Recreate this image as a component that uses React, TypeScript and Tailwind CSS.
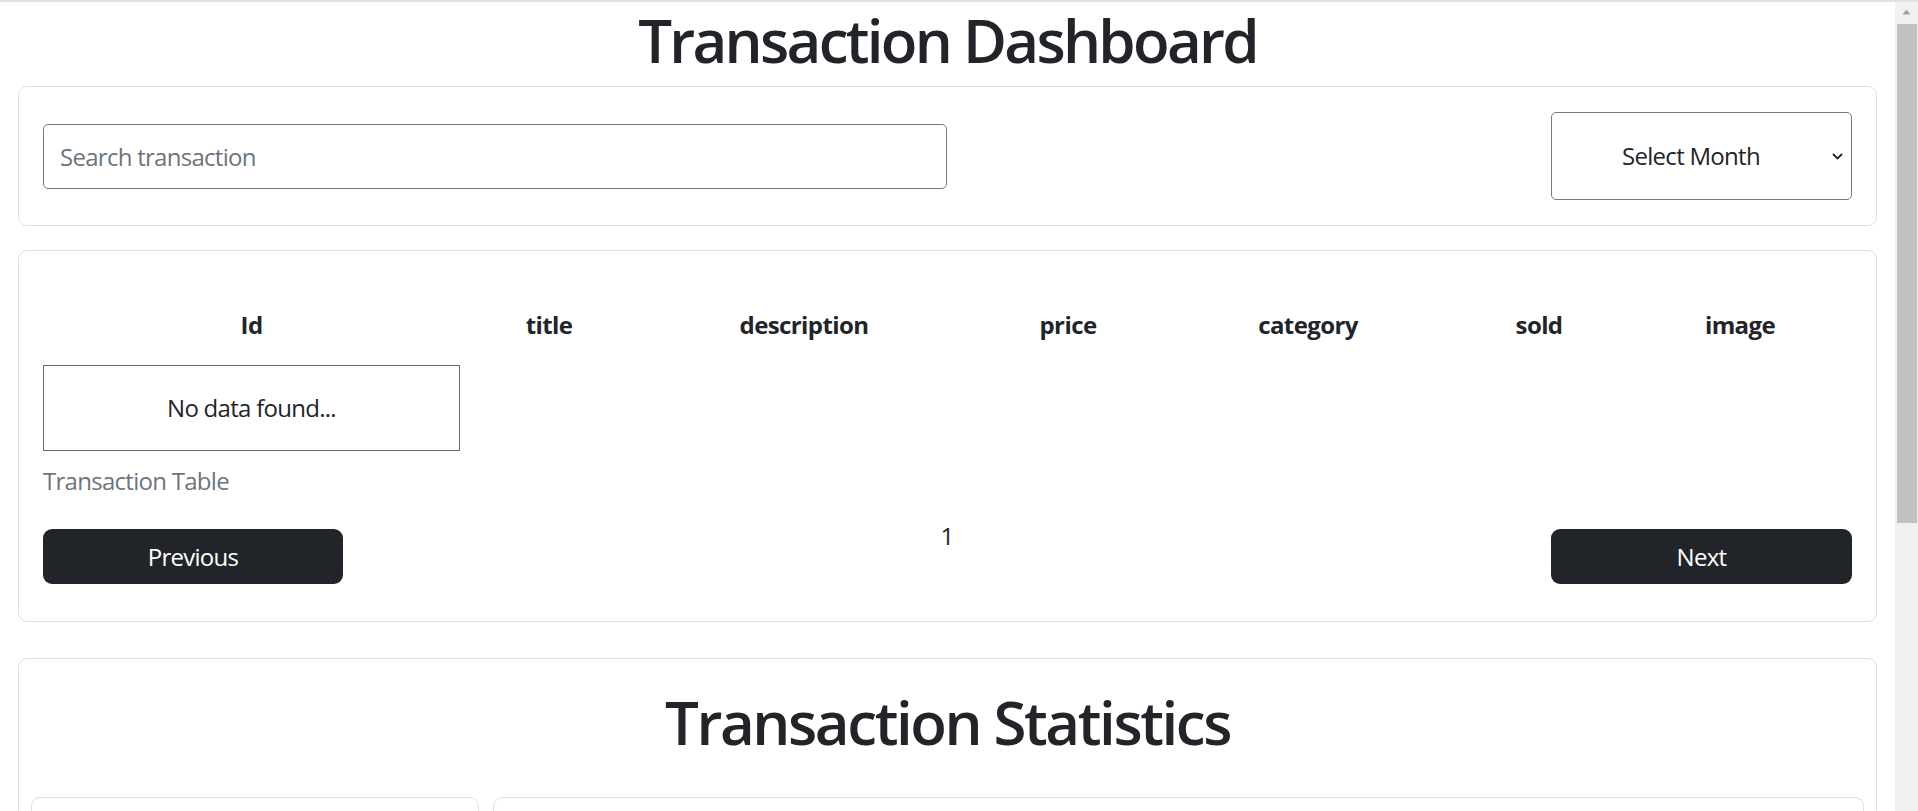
const columns = [
  { label: "Id", width: "w-[417px]" },
  { label: "title", width: "w-[178px]" },
  { label: "description", width: "w-[332px]" },
  { label: "price", width: "w-[196px]" },
  { label: "category", width: "w-[284px]" },
  { label: "sold", width: "w-[178px]" },
  { label: "image", width: "w-[224px]" },
];

function Scrollbar() {
  return (
    <div className="w-[23px] shrink-0 bg-[#f1f1f1] flex flex-col">
      <div className="h-[20px] flex items-center justify-center">
        <svg width="9" height="6" viewBox="0 0 9 6">
          <path d="M4.5 0.5 L8.5 5.5 L0.5 5.5 Z" fill="#a3a3a3" />
        </svg>
      </div>
      <div className="mt-[2px] ml-[2px] mr-[1px] h-[499px] bg-[#c1c1c1]" />
    </div>
  );
}

export default function App() {
  return (
    <div className="h-screen overflow-hidden flex flex-col bg-white text-[#212529] font-['Open_Sans',sans-serif] tracking-[-0.03em] text-[24px] leading-[36px]">
      <div className="h-[2px] shrink-0 bg-[#e1e1e1]" />
      <div className="flex flex-1 min-h-0">
        <main className="flex-1 px-[18px]">
          <h1 className="mt-[2px] text-center text-[60px] leading-[72px] font-semibold tracking-[-0.045em]">
            Transaction Dashboard
          </h1>

          {/* Filters */}
          <section className="mt-[10px] border border-[#dfdfdf] rounded-[9px] px-[24px] py-[25px] flex items-center justify-between">
            <input
              type="text"
              placeholder="Search transaction"
              className="w-[904px] h-[65px] border border-[#7a7a7a] rounded-[5px] px-[16px] outline-none placeholder:text-[#6c757d]"
            />
            <div className="relative w-[301px] h-[88px]">
              <select className="w-full h-full appearance-none border border-[#7a7a7a] rounded-[5px] bg-white pl-[12px] pr-[33px] text-center text-[#212529] outline-none">
                <option>Select Month</option>
              </select>
              <svg
                className="absolute right-[9px] top-[41px] pointer-events-none"
                width="11"
                height="7"
                viewBox="0 0 11 7"
              >
                <path d="M1 1 L5.5 5.5 L10 1" fill="none" stroke="#212529" strokeWidth="1.8" />
              </svg>
            </div>
          </section>

          {/* Table */}
          <section className="mt-[24px] border border-[#dfdfdf] rounded-[9px] px-[24px] pt-[24px] pb-[37px]">
            <table className="w-full table-fixed border-separate border-spacing-0">
              <caption className="caption-bottom text-left pt-[12px] text-[#6c757d]">
                Transaction Table
              </caption>
              <thead>
                <tr>
                  {columns.map((col) => (
                    <th
                      key={col.label}
                      className={`${col.width} pt-[32px] pb-[22px] font-bold text-center tracking-[-0.025em]`}
                    >
                      {col.label}
                    </th>
                  ))}
                </tr>
              </thead>
              <tbody>
                <tr>
                  <td className="border border-[#6b6b6b] py-[24px] text-center">No data found...</td>
                </tr>
              </tbody>
            </table>

            <div className="mt-[19px] flex items-start justify-between">
              <button className="mt-[11px] w-[300px] h-[55px] rounded-[9px] bg-[#212529] text-white flex items-center justify-center">
                Previous
              </button>
              <span>1</span>
              <button className="mt-[11px] w-[301px] h-[55px] rounded-[9px] bg-[#212529] text-white flex items-center justify-center">
                Next
              </button>
            </div>
          </section>

          {/* Statistics */}
          <section className="mt-[36px] border border-[#dfdfdf] rounded-[9px] px-[12px] pt-[27px]">
            <h2 className="text-center text-[60px] leading-[72px] font-semibold tracking-[-0.04em]">
              Transaction Statistics
            </h2>
            <div className="mt-[39px] flex gap-[14px]">
              <div className="w-[448px] h-[80px] border border-[#dfdfdf] rounded-[9px]" />
              <div className="flex-1 h-[80px] border border-[#dfdfdf] rounded-[9px]" />
            </div>
          </section>
        </main>
        <Scrollbar />
      </div>
    </div>
  );
}
